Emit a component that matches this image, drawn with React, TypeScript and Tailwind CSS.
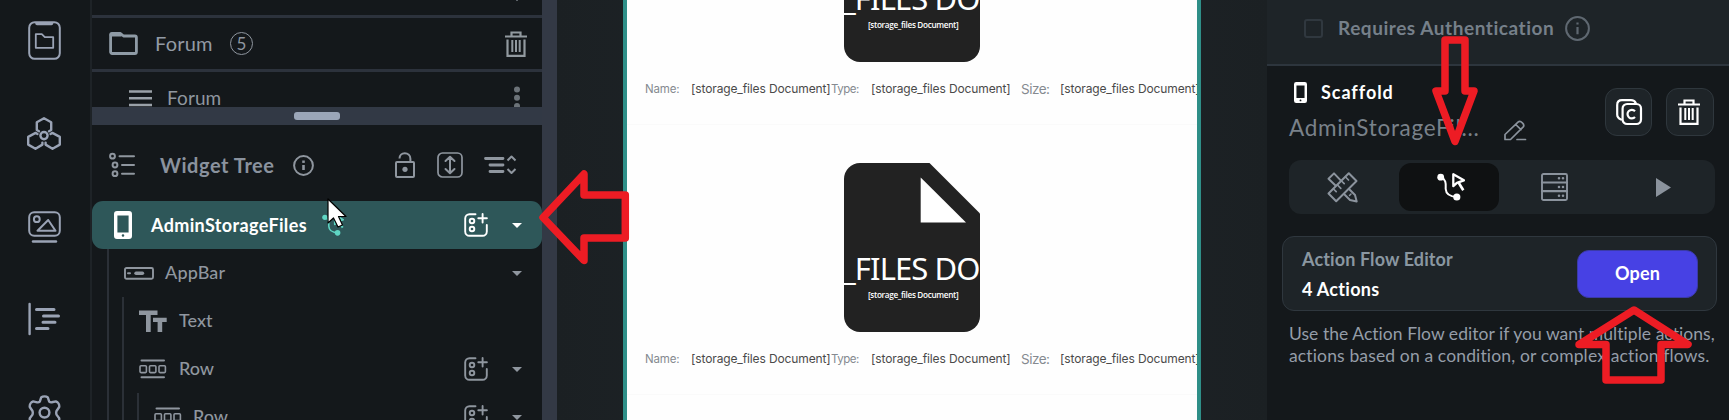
import React from "react";
import type { ReactNode } from "react";

type IconProps = { w: number; h: number; className?: string; sw?: number; children: ReactNode };

function Icon({ w, h, className = "", sw = 2, children }: IconProps) {
  return (
    <svg
      width={w}
      height={h}
      viewBox={`0 0 ${w} ${h}`}
      fill="none"
      stroke="currentColor"
      strokeWidth={sw}
      strokeLinecap="round"
      strokeLinejoin="round"
      className={`block shrink-0 overflow-visible ${className}`}
    >
      {children}
    </svg>
  );
}

const PhoneFolder = () => (
  <Icon w={33} h={39} className="mt-[21px]">
    <rect x="1.2" y="1.2" width="30.6" height="36.6" rx="5.5" />
    <path d="M9 2.6h14.5" strokeWidth="3.4" />
    <path d="M7.8 13.2h6l3 3h8.4v10.6H7.8z" strokeWidth="1.8" />
  </Icon>
);

const Hexes = () => (
  <Icon w={34} h={33} className="mt-[57px]" sw={2.4}>
    <path d="M12 14.300 9.800 13V5.200L17 1.200l7.200 4V13l-2.200 1.300" />
    <path d="M10.500 17 8.600 15.900 1.200 19.900v7.700l7.300 4.200 6.900-4.200v-2" />
    <path d="M23.500 17l1.900-1.100 7.400 4v7.700l-7.300 4.200-6.900-4.200v-2" />
    <circle cx="17" cy="18.600" r="3.600" />
  </Icon>
);

const Media = () => (
  <Icon w={33} h={32} className="mt-[61px]">
    <rect x="1.2" y="1.2" width="30.6" height="23.6" rx="5" />
    <circle cx="8.8" cy="8.2" r="2.9" />
    <path d="M9.5 19.8 20.2 9l7.3 10.8z" />
    <path d="M5 30.5h23" strokeWidth="2.4" />
  </Icon>
);

const Outline = () => (
  <Icon w={33} h={32} className="mt-[60px]" sw={3}>
    <path d="M1.6 1v30" strokeWidth="2.4" />
    <path d="M8.5 6.5h17.5M15.5 13h15M15 19.3h12M8.5 25.6h11.5" />
  </Icon>
);

const Gear = () => (
  <Icon w={35} h={36} className="mt-[60px]" sw={2.4}>
    <path d="M14.2 2.4c1.6-1.4 5-1.4 6.600 0l1.400 4.200c.9.800 1.600.9 2.600.7l4.100-.9c2.200.7 3.700 3.200 3.300 5.600L29.500 16c-.4 1.300-.4 2.400 0 3.600l2.700 3.600c.4 2.400-1.100 4.900-3.300 5.600l-4.100-.9c-1-.2-1.700-.1-2.600.7l-1.400 4.200c-1.600 1.400-5 1.400-6.600 0l-1.400-4.200c-.9-.8-1.600-.9-2.600-.7l-4.100.9c-2.200-.7-3.700-3.200-3.300-5.600L5.500 19.600c.4-1.200.4-2.300 0-3.600L2.800 12c-.4-2.400 1.100-4.900 3.300-5.600l4.100.9c1 .2 1.700.1 2.600-.7z" />
    <circle cx="17.5" cy="17.600" r="4.900" />
  </Icon>
);

const Trash = ({ className = "" }: { className?: string }) => (
  <svg width="22" height="26" viewBox="0 0 22 26" className={`block shrink-0 ${className}`} fill="none" stroke="currentColor" strokeWidth="2.200">
    <path d="M0 5.500h22M6.500 5V1.500h9V5" />
    <path d="M2.500 8.500V24.900h17V8.500" />
    <path d="M7.300 9v12M11 9v12M14.700 9v12" strokeWidth="2" />
  </svg>
);

const Phone = ({ w, h }: { w: number; h: number }) => (
  <svg width={w} height={h} viewBox="0 0 18 28" preserveAspectRatio="none" className="block shrink-0">
    <path
      fillRule="evenodd"
      fill="currentColor"
      d="M3 0h12a3 3 0 0 1 3 3v22a3 3 0 0 1-3 3H3a3 3 0 0 1-3-3V3a3 3 0 0 1 3-3zM3.400 4.600v16.800h11.200V4.600zM9 23.200a1.300 1.300 0 1 0 0 2.600 1.300 1.300 0 0 0 0-2.600z"
    />
  </svg>
);

const AddComponent = () => (
  <Icon w={24} h={24} sw={1.9}>
    <path d="M11.500 1.200H5.500A4.300 4.300 0 0 0 1.200 5.500v13a4.300 4.300 0 0 0 4.300 4.300h13a4.300 4.300 0 0 0 4.300-4.300V12" />
    <path d="M18.600 1v8.500M14.300 5.200h8.600" />
    <circle cx="8" cy="8" r="2.300" />
    <circle cx="8" cy="16" r="2.300" />
  </Icon>
);

const Caret = () => (
  <Icon w={10} h={5} sw={0}>
    <path d="M0 0h10L5 5z" fill="currentColor" />
  </Icon>
);

const RowIcon = () => (
  <Icon w={28} h={20} sw={2}>
    <path d="M2.500 1.500h22.500M2.500 18.300h22.500" />
    <g strokeWidth="1.600">
      <rect x="1" y="6.800" width="6.400" height="6.800" rx="1" />
      <rect x="10.500" y="6.800" width="6.400" height="6.800" rx="1" />
      <rect x="20" y="6.800" width="6.400" height="6.800" rx="1" />
    </g>
  </Icon>
);

const FlowIcon = ({ w, h }: { w: number; h: number }) => (
  <svg width={w} height={h} viewBox="0 0 28 28" className="block shrink-0 overflow-visible" fill="none" stroke="currentColor" strokeWidth="2" strokeLinejoin="round">
    <circle cx="3.700" cy="4.200" r="3.400" fill="currentColor" stroke="none" />
    <circle cx="19.800" cy="24" r="3.600" fill="currentColor" stroke="none" />
    <path d="M4 4.500c6 2 4.500 8 4.700 11.500.3 5 3.500 7.500 11 8" />
    <path d="M16.300 1.200v12l3.600-3.400 7-2.500z" strokeWidth="2.300" />
    <path d="M21.500 9.500l4.800 7.800" strokeWidth="2.600" />
  </svg>
);

function FileCard({ clipped = false }: { clipped?: boolean }) {
  return (
    <div className={`relative ml-[217px] w-[136px] overflow-hidden text-white ${clipped ? "h-[62px]" : "h-[169px]"}`}>
      <svg width="136" height="169" viewBox="0 0 136 169" className={`absolute left-0 ${clipped ? "bottom-0" : "top-0"}`}>
        <path fill="#222222" d="M16 0H85.500L136 50.500V153a16 16 0 0 1-16 16H16a16 16 0 0 1-16-16V16A16 16 0 0 1 16 0z" />
        <path fill="#ffffff" d="M76.700 14.500V59.500H122z" />
      </svg>
      <div className="absolute bottom-[42px] left-[-2px] h-[44px] font-['Noto_Sans',sans-serif] text-[31px] leading-[44px] tracking-[-0.900px] whitespace-nowrap">
        _FILES DO
      </div>
      <div className="absolute bottom-[31px] left-[24px] whitespace-nowrap font-['Open_Sans',sans-serif] text-[8.200px] leading-[12px] font-semibold tracking-[-0.330px]">
        [storage_files Document]
      </div>
    </div>
  );
}

function FileMeta() {
  return (
    <div className="flex h-[20px] items-center overflow-hidden pl-[18px] font-[Inter,sans-serif] text-[12px] leading-[20px] font-normal whitespace-nowrap text-[#4a4a4a]">
      <span className="w-[46px] shrink-0 text-[11.500px] tracking-[-0.150px] text-[#858a90]">Name:</span>
      <span className="w-[140px] shrink-0 tracking-[-0.120px]">[storage_files Document]</span>
      <span className="w-[40px] shrink-0 text-[11.500px] tracking-[-0.500px] text-[#858a90]">Type:</span>
      <span className="w-[150px] shrink-0 tracking-[-0.120px]">[storage_files Document]</span>
      <span className="w-[39px] shrink-0 text-[13.500px] tracking-[-0.500px] text-[#858a90]">Size:</span>
      <span className="shrink-0 tracking-[-0.120px]">[storage_files Document]</span>
    </div>
  );
}

function Rail() {
  return (
    <nav className="flex w-[92px] shrink-0 flex-col items-center overflow-hidden border-r-2 border-[#1e2327] pr-[2px] text-[#9aa3b5]">
      <PhoneFolder />
      <Hexes />
      <Media />
      <Outline />
      <Gear />
    </nav>
  );
}

function LeftPanel() {
  return (
    <section className="flex w-[450px] shrink-0 flex-col text-[#8f969f]">
      <div className="flex h-[15px] shrink-0 justify-end pr-[24px]">
        <div className="h-[1px] w-[2px] bg-[#5c6268]" />
      </div>
      <div className="flex h-[57px] shrink-0 items-center border-y-[3px] border-[#2c323c] pr-[15px] pl-[17px]">
        <Icon w={29} h={23} className="text-[#8f9ba6]" sw={2.800}>
          <path d="M1.600 3v17a1.500 1.500 0 0 0 1.500 1.500h22.800a1.500 1.500 0 0 0 1.500-1.500V5.500A1.500 1.500 0 0 0 25.900 4H14.500L11.500 1.500H3A1.500 1.500 0 0 0 1.600 3z" />
          <path d="M2 3h10" />
        </Icon>
        <span className="ml-[17px] w-[75px] pb-[2px] text-[20px] tracking-[0.200px] text-[#929aa4]">Forum</span>
        <span className="flex h-[23px] w-[23px] items-center justify-center rounded-full border border-[#8f969f] text-[17px] leading-none">5</span>
        <Trash className="ml-auto text-[#929aa0]" />
      </div>
      <div className="flex h-[35px] shrink-0 items-start overflow-hidden pt-[14px] pr-[22px] pl-[37px]">
        <Icon w={23} h={24} sw={2.400} className="mt-[3px] text-[#9aa1a8]">
          <path d="M0 2.500h23M0 9.300h23M0 16h23" strokeLinecap="butt" />
        </Icon>
        <span className="ml-[15px] text-[19px] leading-[24px] tracking-[0.100px]">Forum</span>
        <Icon w={6} h={24} sw={0} className="ml-auto text-[#6c7379]">
          <circle cx="3" cy="3.500" r="3" fill="currentColor" />
          <circle cx="3" cy="11.700" r="3" fill="currentColor" />
          <circle cx="3" cy="20" r="3" fill="currentColor" />
        </Icon>
      </div>
      <div className="flex h-[18px] shrink-0 items-center bg-[#323945] pl-[202px]">
        <div className="h-[8px] w-[46px] rounded-[3px] bg-[#9ba6b8]" />
      </div>
      <div className="flex h-[76px] shrink-0 items-center pt-[4px] pr-[26px] pl-[17px]">
        <Icon w={26} h={24} sw={2}>
          <circle cx="3.500" cy="3.200" r="2.400" />
          <circle cx="6" cy="12" r="2.400" />
          <circle cx="6" cy="20.700" r="2.400" />
          <path d="M10.500 3.200H25M13 12h12M13 20.700h12" />
        </Icon>
        <span className="ml-[25px] w-[133px] text-[20px] font-bold tracking-[0.550px] whitespace-nowrap text-[#8a929e]">Widget Tree</span>
        <Icon w={21} h={21} sw={2}>
          <circle cx="10.500" cy="10.500" r="9.400" />
          <path d="M10.500 10v5" strokeWidth="2.600" strokeLinecap="butt" />
          <path d="M10.500 5.500v2.400" strokeWidth="2.600" strokeLinecap="butt" />
        </Icon>
        <Icon w={20} h={26} className="ml-auto" sw={2}>
          <rect x="1" y="10" width="18" height="15" rx="1" />
          <path d="M4.500 6.500c0-3 2.200-5.300 5.300-5.300s5.600 2.300 5.600 5.500V10" strokeLinecap="butt" />
          <circle cx="10" cy="17.300" r="2.600" fill="currentColor" stroke="none" />
        </Icon>
        <Icon w={26} h={26} className="ml-[22px]" sw={1.700}>
          <rect x="1" y="1" width="24" height="24" rx="4.500" />
          <path d="M13 5v16M8.500 9 13 4.800 17.500 9M8.500 17l4.500 4.200 4.500-4.200" strokeWidth="2" />
        </Icon>
        <Icon w={32} h={20} className="ml-[21px]" sw={2.800}>
          <path d="M1.500 3.500h17.500M6 10h13M6 16.500h13" />
          <path d="M23.500 5.500 27.500 1.500l4 4M23.500 14l4 4 4-4" strokeWidth="2" strokeLinecap="butt" />
        </Icon>
      </div>
      <div className="flex h-[48px] shrink-0 items-center rounded-[11px] bg-[#2e5759] pr-[20px] pl-[22px] text-white">
        <Phone w={18} h={28} />
        <span className="ml-[19px] w-[171px] text-[18px] font-bold tracking-[0.360px]">AdminStorageFiles</span>
        <span className="text-[#5fd6c4]">
          <FlowIcon w={22} h={22} />
        </span>
        <span className="mr-[24px] ml-auto">
          <AddComponent />
        </span>
        <Caret />
      </div>
      <div className="ml-[15px] flex flex-1 flex-col border-l-2 border-[#2b3037] pl-[13px] text-[18px] font-medium">
        <div className="flex h-[48px] shrink-0 items-center pr-[20px] pl-[2px]">
          <Icon w={30} h={13} sw={1.900}>
            <rect x="1" y="1" width="28" height="10.800" rx="1.500" />
            <path d="M12 6.300h6.500" strokeWidth="3.400" />
            <path d="M4 6.300h2" strokeWidth="2" />
          </Icon>
          <span className="mr-auto ml-[11px] pb-[1px] tracking-[0.150px]">AppBar</span>
          <Caret />
        </div>
        <div className="flex flex-1 flex-col border-l-2 border-[#2b3037] pl-[13px]">
          <div className="flex h-[48px] shrink-0 items-center pl-[2px]">
            <Icon w={28} h={22} sw={0}>
              <path d="M0 0.500h18.500v4.600H11.700V22H7V5.100H0zM14 7.700h13.700v4.300h-4.500V22h-4.600V12H14z" fill="currentColor" />
            </Icon>
            <span className="ml-[12px] pb-[2px]">Text</span>
          </div>
          <div className="flex h-[48px] shrink-0 items-center pr-[20px] pl-[2px]">
            <RowIcon />
            <span className="mr-auto ml-[12px] pb-[1px]">Row</span>
            <span className="mr-[24px]">
              <AddComponent />
            </span>
            <Caret />
          </div>
          <div className="flex h-[27px] shrink-0 items-start overflow-hidden border-l-2 border-[#2b3037] pl-[15px]">
            <div className="flex h-[48px] w-full items-center pr-[20px]">
              <RowIcon />
              <span className="mr-auto ml-[11px] pb-[1px]">Row</span>
              <span className="mr-[24px]">
                <AddComponent />
              </span>
              <Caret />
            </div>
          </div>
        </div>
      </div>
    </section>
  );
}

function Canvas() {
  return (
    <main className="flex w-[710px] shrink-0 bg-gradient-to-r from-[#1b2023] via-[#20262a] to-[#1b2023] pl-[66px]">
      <div className="flex h-[420px] w-[578px] flex-col overflow-hidden border-x-4 border-[#2f8f88] bg-[#fefefe]">
        <FileCard clipped />
        <div className="h-[17px] shrink-0" />
        <FileMeta />
        <div className="mt-[25px] mb-[38px] h-px shrink-0 bg-[#fafafa]" />
        <FileCard />
        <div className="h-[17px] shrink-0" />
        <FileMeta />
        <div className="mt-[25px] h-px shrink-0 bg-[#fafafa]" />
      </div>
    </main>
  );
}

const Tools = () => (
  <Icon w={31} h={31} sw={2}>
    <path d="M1.500 21.500 21.800 1.300l7.700 7.700L9.200 29.300z" />
    <path d="M6.500 17l2.700 2.700M10.500 13l3.300 3.300M14.500 9l2.700 2.700M18.500 5l3 3" strokeWidth="1.700" />
    <path d="M8.500 13.500 1.500 6.800 7 1.400l6.700 7" />
    <path d="M22 17l6 6 1.700 6.500L23 28l-6-6" />
    <path d="M22.500 23.500 24 22" strokeWidth="1.500" />
  </Icon>
);

function RightPanel() {
  return (
    <aside className="flex w-[462px] shrink-0 flex-col text-[#8b939d]">
      <div className="flex h-[66px] shrink-0 items-center border-b-[2px] border-[#2d353d] bg-[#1e2428] pb-[8px] pl-[37px] text-[#76808a]">
        <div className="h-[19px] w-[19px] rounded-[3px] border-2 border-[#30383f]" />
        <span className="ml-[15px] w-[227px] text-[19px] font-bold tracking-[0.550px] whitespace-nowrap">Requires Authentication</span>
        <Icon w={25} h={25} className="text-[#5f6871]" sw={2}>
          <circle cx="12.500" cy="12.500" r="11.400" />
          <path d="M12.500 11v7.200M12.500 6.600v2" strokeLinecap="butt" strokeWidth="2.200" />
        </Icon>
      </div>
      <div className="flex h-[94px] shrink-0 pl-[22px]">
        <div className="w-[215px] shrink-0 pt-[14px]">
          <div className="flex h-[24px] items-center pl-[5px] text-white">
            <Phone w={13} h={21} />
            <span className="ml-[14px] text-[18px] font-bold tracking-[0.950px]">Scaffold</span>
          </div>
          <div className="mt-[10px] text-[22.500px] leading-[28px] tracking-[0.700px] whitespace-nowrap text-[#79818a]">AdminStorageFil...</div>
        </div>
        <Icon w={22} h={21} className="mt-[54px] text-[#8b939d]" sw={1.700}>
          <path d="M1 19.500v-5L14 2.200c2.500-2.200 7.500 2.200 5 5L6.500 19.500zM11.700 4.500l5.300 5.200M13 19.500h8.500" />
        </Icon>
        <div className="mt-[22px] ml-[79px] flex h-[48px] gap-[14px] text-white">
          <div className="flex w-[47px] items-center justify-center rounded-[12px] border border-[#2f373d] bg-[#1e2428]">
            <Icon w={26} h={26} sw={2.200}>
              <rect x="6.600" y="5" width="18.400" height="20" rx="4.500" />
              <path d="M5 20.500c-2.500-1-3.800-2.500-3.800-5V6c0-3 1.800-4.800 4.800-4.800h9c2.500 0 4 1 4.700 2.800" />
              <path d="M19 12.200a4.300 4.300 0 1 0 0 5.800" strokeLinecap="butt" />
            </Icon>
          </div>
          <div className="flex w-[48px] items-center justify-center rounded-[12px] border border-[#2f373d] bg-[#1e2428] pr-[2px]">
            <Trash />
          </div>
        </div>
      </div>
      <div className="ml-[22px] flex h-[54px] w-[426px] shrink-0 items-center rounded-[12px] bg-[#1e2428]">
        <div className="flex w-[110px] justify-center pr-[4px]">
          <Tools />
        </div>
        <div className="flex h-[48px] w-[100px] items-center justify-center rounded-[12px] bg-[#0f1112] pl-[3px] text-white">
          <FlowIcon w={28} h={28} />
        </div>
        <div className="ml-[42px]">
          <Icon w={27} h={28} sw={1.900}>
            <rect x="1" y="1" width="25" height="26" rx="1.500" />
            <path d="M1 9.500h25M1 18.200h25" strokeWidth="2.200" />
            <path d="M18 5.300h.01M22 5.300h.01M18 14h.01M22 14h.01M18 22.700h.01M22 22.700h.01" strokeWidth="2.600" />
          </Icon>
        </div>
        <div className="ml-[88px]">
          <Icon w={15} h={19} sw={0}>
            <path d="M0 0v19l15-9.500z" fill="currentColor" />
          </Icon>
        </div>
      </div>
      <div className="mt-[22px] ml-[15px] flex h-[75px] w-[435px] shrink-0 items-center justify-between rounded-[12px] border border-[#2f373e] bg-[#1e2428] pr-[18px] pl-[19px]">
        <div className="text-[18px] leading-[30px] font-bold whitespace-nowrap">
          <div className="tracking-[0.120px] text-[#8a97a1]">Action Flow Editor</div>
          <div className="tracking-[0.300px] text-white">4 Actions</div>
        </div>
        <button className="h-[48px] w-[121px] rounded-[12px] border border-[#3b3aa8] bg-[#4741e4] text-[18px] font-bold tracking-[0.200px] text-white">Open</button>
      </div>
      <div className="mt-[12px] pl-[22px] text-[17.500px] leading-[22px] whitespace-nowrap text-[#959da8]">
        <div className="tracking-[0.040px]">Use the Action Flow editor if you want multiple actions,</div>
        <div className="tracking-[0.140px]">actions based on a condition, or complex action flows.</div>
      </div>
    </aside>
  );
}

export default function App() {
  return (
    <div className="relative flex h-[420px] w-[1732px] overflow-hidden bg-white font-[Lato,sans-serif]">
      <div className="flex w-[1729px] shrink-0 bg-[#14181b]">
        <Rail />
        <LeftPanel />
        <div className="w-[15px] shrink-0 bg-[#333945]" />
        <Canvas />
        <RightPanel />
      </div>
      <svg
        width="1732"
        height="420"
        viewBox="0 0 1732 420"
        className="pointer-events-none absolute inset-0"
        fill="none"
        stroke="#ed1c24"
        strokeWidth="7.500"
        strokeLinejoin="round"
      >
        <path d="M328 199v24l5.500-5 4.500 9 4.500-2-4-8.500h7.500z" fill="#ffffff" stroke="#000000" strokeWidth="1.200" />
        <path d="M584 174v21h41.300v43H584v22.500L543 217.500z" />
        <path d="M1445 40h20v51h9L1455 141.500 1436 91h9z" />
        <path d="M1634 310l54 34.500h-27V380h-55v-35.500h-27z" />
      </svg>
    </div>
  );
}
